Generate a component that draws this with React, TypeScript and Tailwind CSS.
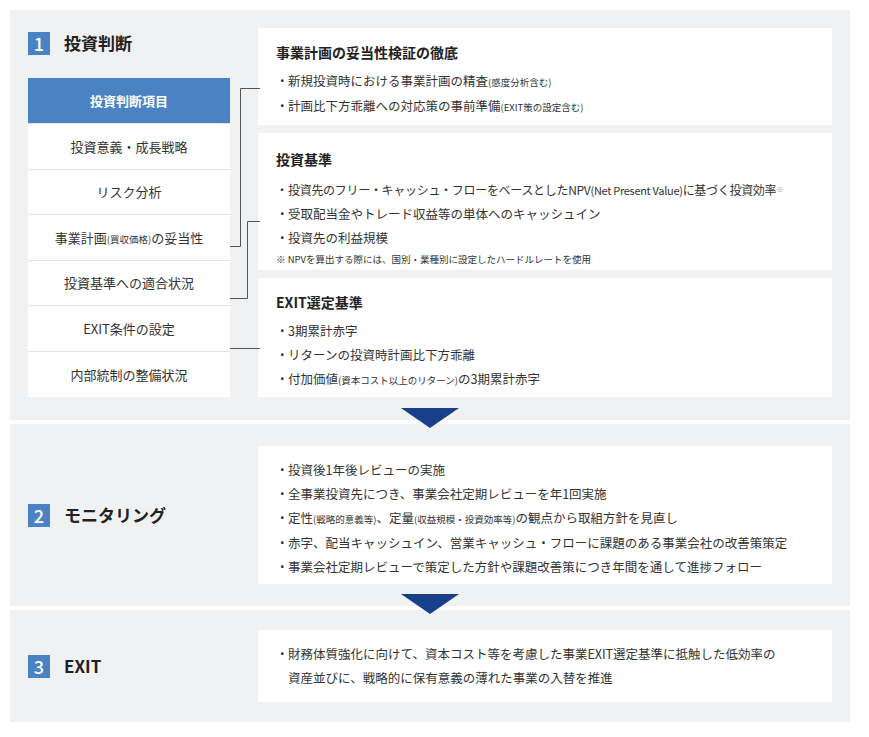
import React from "react";

const font = { fontFamily: '"Noto Sans CJK JP", "Noto Sans", sans-serif' };

function Num({ n }: { n: string }) {
  return <span className="flex h-[23px] w-[22px] items-center justify-center bg-[#4a83c4] text-[18px] font-medium text-white">{n}</span>;
}

function Arrow() {
  return (
    <div className="relative h-[4px] bg-white">
      <svg className="absolute left-[391px] top-[-12px]" width="58" height="20" viewBox="0 0 58 20">
        <polygon points="0,0 58,0 29,20" fill="#183f8a" />
      </svg>
    </div>
  );
}

const Li = ({ children }: { children: React.ReactNode }) => (
  <li className="flex whitespace-nowrap text-[12.5px] leading-[24px] text-[#333]"><span className="w-[12px] shrink-0">・</span><span>{children}</span></li>
);
const Sm = ({ children }: { children: React.ReactNode }) => <span className="text-[9.5px]">{children}</span>;

export default function App() {
  const rows = ["投資意義・成長戦略", "リスク分析", null, "投資基準への適合状況", "EXIT条件の設定", "内部統制の整備状況"];
  return (
    <div className="h-[737px] w-[869px] bg-white pl-[10px] pt-[10px]" style={font}>
      <div className="w-[840px]">
        <div className="relative flex bg-[#f0f1f3] px-[18px] pt-[18px] pb-[23px]">
          <div className="w-[202px]">
            <div className="flex h-[50px] items-start gap-[14px] pt-[4px]">
              <Num n="1" />
              <span className="text-[17px] font-bold leading-[22px] text-[#222]">投資判断</span>
            </div>
            <div className="flex h-[45px] items-center justify-center bg-[#4a83c4] text-[13px] font-bold text-white">投資判断項目</div>
            {rows.map((r, i) => (
              <div key={i} className="flex h-[45.6px] items-center justify-center border-t border-[#e2e3e5] bg-white text-[13px] text-[#333]">
                {r ?? <span>事業計画<Sm>(買収価格)</Sm>の妥当性</span>}
              </div>
            ))}
          </div>
          <svg className="absolute left-[220px] top-[60px]" width="30" height="300" fill="none" stroke="#555" strokeWidth="1">
            <polyline points="0,176.5 10.5,176.5 10.5,18.5 30,18.5" />
            <polyline points="0,228.5 17.5,228.5 17.5,151.5 30,151.5" />
            <polyline points="0,278.5 30,278.5" />
          </svg>
          <div className="ml-[28px] flex w-[574px] flex-col gap-[8px]">
            <div className="h-[97px] bg-white px-[18px] pt-[14px]">
              <div className="mb-[6px] text-[14px] font-bold text-[#222]">事業計画の妥当性検証の徹底</div>
              <ul>
                <Li>新規投資時における事業計画の精査<Sm>(感度分析含む)</Sm></Li>
                <Li>計画比下方乖離への対応策の事前準備<Sm>(EXIT策の設定含む)</Sm></Li>
              </ul>
            </div>
            <div className="h-[137px] bg-white px-[18px] pt-[16px]">
              <div className="mb-[8px] text-[14px] font-bold text-[#222]">投資基準</div>
              <ul>
                <li className="flex whitespace-nowrap text-[12px] leading-[24px] tracking-[-0.3px] text-[#333]"><span className="w-[12px] shrink-0">・</span><span>投資先のフリー・キャッシュ・フローをベースとしたNPV<span className="text-[11px]">(Net Present Value)</span>に基づく投資効率<sup className="text-[7px] text-[#999]">※</sup></span></li>
                <Li>受取配当金やトレード収益等の単体へのキャッシュイン</Li>
                <Li>投資先の利益規模</Li>
              </ul>
              <div className="text-[9.5px] leading-[18px] text-[#333]">※ NPVを算出する際には、国別・業種別に設定したハードルレートを使用</div>
            </div>
            <div className="h-[119px] bg-white px-[18px] pt-[14px]">
              <div className="mb-[6px] text-[14px] font-bold text-[#222]">EXIT選定基準</div>
              <ul>
                <Li>3期累計赤字</Li>
                <Li>リターンの投資時計画比下方乖離</Li>
                <Li>付加価値<Sm>(資本コスト以上のリターン)</Sm>の3期累計赤字</Li>
              </ul>
            </div>
          </div>
        </div>
        <Arrow />
        <div className="flex h-[182px] items-center bg-[#f0f1f3] px-[18px]">
          <div className="flex w-[230px] items-center gap-[14px]">
            <Num n="2" />
            <span className="text-[17px] font-bold text-[#222]">モニタリング</span>
          </div>
          <div className="h-[138px] w-[574px] bg-white px-[18px] pt-[12px]">
            <ul>
              <Li>投資後1年後レビューの実施</Li>
              <Li>全事業投資先につき、事業会社定期レビューを年1回実施</Li>
              <Li>定性<Sm>(戦略的意義等)</Sm>、定量<Sm>(収益規模・投資効率等)</Sm>の観点から取組方針を見直し</Li>
              <Li>赤字、配当キャッシュイン、営業キャッシュ・フローに課題のある事業会社の改善策策定</Li>
              <Li>事業会社定期レビューで策定した方針や課題改善策につき年間を通して進捗フォロー</Li>
            </ul>
          </div>
        </div>
        <Arrow />
        <div className="flex h-[112px] items-center bg-[#f0f1f3] px-[18px]">
          <div className="flex w-[230px] items-center gap-[14px]">
            <Num n="3" />
            <span className="text-[17px] font-bold text-[#222]">EXIT</span>
          </div>
          <div className="h-[72px] w-[574px] bg-white px-[18px] pt-[12px]">
            <ul>
              <Li>財務体質強化に向けて、資本コスト等を考慮した事業EXIT選定基準に抵触した低効率の<br />資産並びに、戦略的に保有意義の薄れた事業の入替を推進</Li>
            </ul>
          </div>
        </div>
      </div>
    </div>
  );
}
